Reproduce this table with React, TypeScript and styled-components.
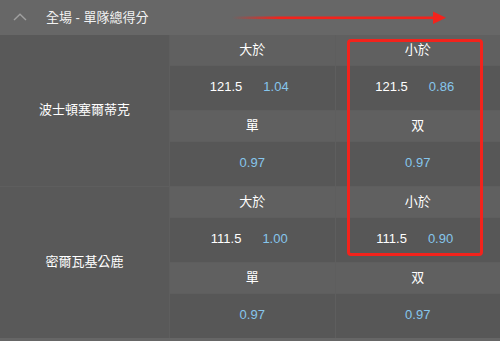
import styled, { createGlobalStyle } from "styled-components";

const GlobalStyle = createGlobalStyle`
  html, body {
    margin: 0;
    padding: 0;
    background: #666666;
  }
  body {
    font-family: "Liberation Sans", Arial, "Noto Sans CJK TC", sans-serif;
    font-size: 13px;
    color: #ffffff;
  }
`;

const Panel = styled.div`
  position: relative;
  width: 500px;
  height: 341px;
  overflow: hidden;
  background: #666666;
`;

const MarketHeader = styled.div`
  height: 35px;
  box-sizing: border-box;
  padding: 0 0 2px 13px;
  display: flex;
  align-items: center;
  gap: 19px;
  background: #676767;
  color: #f2f2f2;
`;

const Table = styled.div`
  display: flex;
  flex-direction: column;
  gap: 1px;
  background: #5e5e5e;
`;

const Group = styled.div`
  display: grid;
  grid-template-columns: 169px 1fr 1fr;
  grid-template-rows: 30px 44px 30px 44px;
  gap: 1px;
  background: #5e5e5e;
`;

const Cell = styled.div`
  box-sizing: border-box;
  display: flex;
  align-items: center;
  justify-content: center;
  padding-bottom: 4px;
`;

const TeamCell = styled(Cell)`
  grid-row: 1 / span 4;
  background: #595959;
  color: #ffffff;
`;

const LabelCell = styled(Cell)`
  background: #606060;
  color: #ffffff;
`;

const ValueCell = styled(Cell)<{ $pair?: boolean }>`
  gap: 21px;
  background: #575757;
  padding-right: ${(p) => (p.$pair ? "6px" : "0")};
`;

const Line = styled.span`
  color: #ffffff;
`;

const Odds = styled.span`
  color: #86c6ec;
`;

const Highlight = styled.div`
  position: absolute;
  left: 347px;
  top: 39px;
  width: 130px;
  height: 211px;
  border: 3px solid #f2231c;
  border-radius: 4px;
`;

const ArrowMark = styled.svg`
  position: absolute;
  left: 200px;
  top: 8px;
`;

type Market = {
  team: string;
  line: string;
  over: string;
  under: string;
  odd: string;
  even: string;
};

const markets: Market[] = [
  { team: "波士頓塞爾蒂克", line: "121.5", over: "1.04", under: "0.86", odd: "0.97", even: "0.97" },
  { team: "密爾瓦基公鹿", line: "111.5", over: "1.00", under: "0.90", odd: "0.97", even: "0.97" },
];

export default function App() {
  return (
    <>
      <GlobalStyle />
      <Panel>
        <MarketHeader>
          <svg width="14" height="8" viewBox="0 0 14 8">
            <path d="M1 7 L7 1.2 L13 7" fill="none" stroke="#a0a0a0" strokeWidth="1.4" />
          </svg>
          <span>全場 - 單隊總得分</span>
        </MarketHeader>
        <Table>
          {markets.map((m) => (
            <Group key={m.team}>
              <TeamCell>{m.team}</TeamCell>
              <LabelCell>大於</LabelCell>
              <LabelCell>小於</LabelCell>
              <ValueCell $pair>
                <Line>{m.line}</Line>
                <Odds>{m.over}</Odds>
              </ValueCell>
              <ValueCell $pair>
                <Line>{m.line}</Line>
                <Odds>{m.under}</Odds>
              </ValueCell>
              <LabelCell>單</LabelCell>
              <LabelCell>双</LabelCell>
              <ValueCell>
                <Odds>{m.odd}</Odds>
              </ValueCell>
              <ValueCell>
                <Odds>{m.even}</Odds>
              </ValueCell>
            </Group>
          ))}
        </Table>
        <Highlight />
        <ArrowMark width="250" height="20" viewBox="0 0 250 20">
          <defs>
            <linearGradient id="fade" x1="32" y1="0" x2="80" y2="0" gradientUnits="userSpaceOnUse">
              <stop offset="0" stopColor="#f2231c" stopOpacity="0" />
              <stop offset="1" stopColor="#f2231c" stopOpacity="1" />
            </linearGradient>
          </defs>
          <rect x="32" y="8.5" width="203" height="2.6" fill="url(#fade)" />
          <polygon points="233,3.5 246,9.8 233,16" fill="#f2231c" />
        </ArrowMark>
      </Panel>
    </>
  );
}
